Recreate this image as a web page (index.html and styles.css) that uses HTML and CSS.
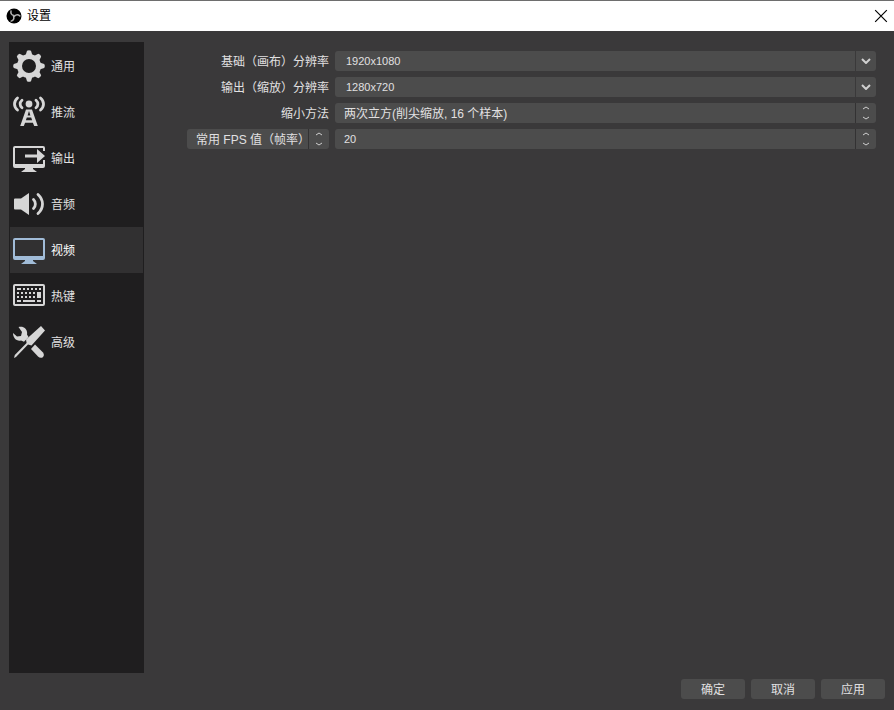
FILE: index.html
```html
<!DOCTYPE html>
<html lang="zh-CN">
<head>
  <meta charset="UTF-8" />
  <title>设置</title>
  <meta name="viewport" content="width=device-width, initial-scale=1.0" />
  <link rel="stylesheet" href="styles.css">
</head>
<body>

<header class="titlebar">
  <svg class="logo" viewBox="0 0 32 32" aria-hidden="true">
    <circle cx="16" cy="16" r="15" fill="#000"/>
    <g fill="none" stroke="#b4b4b4" stroke-width="3" stroke-linecap="round">
      <path d="M10 6c-1 5 1 8 6 9"/>
      <path d="M10 6c-1 5 1 8 6 9" transform="rotate(120 16 16)"/>
      <path d="M10 6c-1 5 1 8 6 9" transform="rotate(240 16 16)"/>
    </g>
  </svg>
  <h1>设置</h1>
  <button type="button" class="close" aria-label="关闭">
    <svg viewBox="0 0 12 12"><path d="M1 1l10 10M11 1L1 11"/></svg>
  </button>
</header>

<div class="content">
  <nav class="sidebar">
    <a href="#general">
      <svg viewBox="0 0 32 32">
        <circle class="ring" cx="16" cy="16" r="9.5"/>
        <path id="tooth" d="M12.500 5.500L14 .8q2-1.200 4 0l1.500 4.700z"/>
        <use href="#tooth" transform="rotate(45 16 16)"/>
        <use href="#tooth" transform="rotate(90 16 16)"/>
        <use href="#tooth" transform="rotate(135 16 16)"/>
        <use href="#tooth" transform="rotate(180 16 16)"/>
        <use href="#tooth" transform="rotate(225 16 16)"/>
        <use href="#tooth" transform="rotate(270 16 16)"/>
        <use href="#tooth" transform="rotate(315 16 16)"/>
      </svg>
      <span>通用</span>
    </a>
    <a href="#stream">
      <svg viewBox="0 0 32 32">
        <circle cx="16" cy="8" r="3.400"/>
        <path class="line" d="M4.500 2c-4 3.500-4 8.500 0 12M27.500 2c4 3.500 4 8.500 0 12M9 4.200c-2.500 2.300-2.500 5.300 0 7.600M23 4.200c2.500 2.300 2.500 5.300 0 7.600"/>
        <path fill-rule="evenodd" d="M13 13.500h6L24.800 30h-3.600l-1.300-3.200h-7.800L10.800 30H7.200zM16 15l-1.400 4.500h2.800zM13.800 21.500l-.9 2.800h6.200l-.9-2.800z"/>
      </svg>
      <span>推流</span>
    </a>
    <a href="#output">
      <svg viewBox="0 0 32 32">
        <path d="M2 4h28q2 0 2 2v3h-2V6H2v16h28v-4h2v6q0 2-2 2H20v1l4 3H8l4-3v-1H2q-2 0-2-2V6q0-2 2-2z"/>
        <path d="M12 12.500h12V7l8 7-8 7v-5.500H12z"/>
      </svg>
      <span>输出</span>
    </a>
    <a href="#audio">
      <svg viewBox="0 0 32 32">
        <path d="M2 10.500h6L16 5v22l-8-5.500H2q-1 0-1-1v-9q0-1 1-1z"/>
        <path class="line" d="M20.500 11.500c2.500 2.500 2.500 6.500 0 9M25 6.500c6 5.500 6 13.500 0 19"/>
      </svg>
      <span>音频</span>
    </a>
    <a href="#video" class="active" aria-current="page">
      <svg viewBox="0 0 32 32">
        <path fill-rule="evenodd" d="M2 4h28q2 0 2 2v18q0 2-2 2H20v1l4 3H8l4-3v-1H2q-2 0-2-2V6q0-2 2-2zm0 2v16h28V6z"/>
      </svg>
      <span>视频</span>
    </a>
    <a href="#hotkeys">
      <svg viewBox="0 0 32 32">
        <path fill-rule="evenodd" d="M2 4h28q2 0 2 2v18q0 2-2 2H2q-2 0-2-2V6q0-2 2-2zm0 2v18h28V6z"/>
        <path class="keys" d="M10 9h18M8 13h14M4 17h18"/>
        <path d="M4 8h4v2H4zM4 12h2v2H4zM24 12h4v6h-4zM4 20h4v2H4zM10 20h12v2H10zM24 20h4v2h-4z"/>
      </svg>
      <span>热键</span>
    </a>
    <a href="#advanced">
      <svg viewBox="0 0 32 32">
        <path d="M28 0l4 4.500L18.500 19.500 15 18.500 3 31l-2 1 .8-3L13.600 17l-.6-3.500z"/>
        <path d="M5.500 1c5-1.500 9.500 2 8.500 7.500l1.500 2.500-4.500 4.800-3-1.300C3.500 15.500 0 12 0 7l4 3.500 4-.5 1-4z"/>
        <path d="M22 18.500l8 8q2 3-.5 5-2.500 1-4.500-1l-7-7.500z"/>
      </svg>
      <span>高级</span>
    </a>
  </nav>

  <main class="panel">
    <form id="settings" class="form">
      <label for="baseRes">基础（画布）分辨率</label>
      <div class="combo">
        <input id="baseRes" type="text" value="1920x1080" />
        <button type="button" aria-label="选择基础分辨率"><svg viewBox="0 0 10 6"><path d="M1 1l4 4 4-4"/></svg></button>
      </div>

      <label for="outputRes">输出（缩放）分辨率</label>
      <div class="combo">
        <input id="outputRes" type="text" value="1280x720" />
        <button type="button" aria-label="选择输出分辨率"><svg viewBox="0 0 10 6"><path d="M1 1l4 4 4-4"/></svg></button>
      </div>

      <label for="downscale">缩小方法</label>
      <div class="select">
        <select id="downscale"><option>两次立方(削尖缩放, 16 个样本)</option></select>
        <svg viewBox="0 0 6 12"><path d="M0 2l3-2 3 2M0 10l3 2 3-2"/></svg>
      </div>

      <div class="select">
        <select id="fpsType" aria-label="FPS 类型"><option>常用 FPS 值（帧率）</option></select>
        <svg viewBox="0 0 6 12"><path d="M0 2l3-2 3 2M0 10l3 2 3-2"/></svg>
      </div>
      <div class="select">
        <select id="fps" class="number" aria-labelledby="fpsType"><option>20</option></select>
        <svg viewBox="0 0 6 12"><path d="M0 2l3-2 3 2M0 10l3 2 3-2"/></svg>
      </div>
    </form>
  </main>
</div>

<footer class="actions">
  <button type="submit" form="settings">确定</button>
  <button type="button">取消</button>
  <button type="button">应用</button>
</footer>

</body>
</html>
```
FILE: styles.css
```css
* { box-sizing: border-box; }
body {
  margin: 0;
  min-height: 100vh;
  display: flex;
  flex-direction: column;
  background: #3a393a;
  color: #e1e0e1;
  font-family: "Liberation Sans", "Noto Sans CJK SC", sans-serif;
  font-size: 12px;
  line-height: 20px;
}
button, input, select {
  font: inherit;
  color: inherit;
  margin: 0;
  padding: 0;
  border: none;
  border-radius: 0;
  background: #4c4c4c;
}

/* title bar */
.titlebar {
  display: flex;
  align-items: center;
  height: 31px;
  padding: 0 6px;
  border-top: 1px solid #6e6e6e;
  background: #fff;
  color: #000;
}
.titlebar h1 {
  flex: 1;
  margin: 0 0 0 5px;
  font-size: 12px;
  font-weight: normal;
}
.logo { width: 16px; height: 16px; }
.close {
  display: flex;
  background: none;
  cursor: pointer;
}
.close svg {
  width: 14px;
  height: 14px;
  fill: none;
  stroke: #000;
}

/* body */
.content {
  flex: 1;
  display: flex;
  padding: 11px 9px 0;
}
.sidebar {
  width: 135px;
  padding: 1px;
  background: #1f1e1f;
}
.sidebar a {
  display: flex;
  align-items: center;
  gap: 6px;
  height: 46px;
  padding-left: 3px;
  color: #e1e0e1;
  text-decoration: none;
}
.sidebar a.active { background: #313031; color: #fff; }
.sidebar span { padding-top: 2px; }
.sidebar svg {
  width: 32px;
  height: 32px;
  fill: #d6d6d6;
}
.sidebar .active svg { fill: #a1bcd8; }
.sidebar .line {
  fill: none;
  stroke: #d6d6d6;
  stroke-width: 2.8;
  stroke-linecap: round;
}
.sidebar .ring {
  fill: none;
  stroke: #d6d6d6;
  stroke-width: 5;
}
.sidebar .keys {
  fill: none;
  stroke: #d6d6d6;
  stroke-width: 2;
  stroke-dasharray: 2 2;
}

/* form */
.panel { flex: 1; padding: 9px 9px 0 43px; }
.form {
  display: grid;
  grid-template-columns: 142px 1fr;
  grid-auto-rows: 20px;
  gap: 6px;
}
.form label {
  line-height: 22px;
  text-align: right;
}
.combo, .select {
  position: relative;
  display: flex;
  border-radius: 3px;
  overflow: hidden;
}
.combo { gap: 1px; }
.combo input {
  flex: 1;
  min-width: 0;
  padding-left: 11px;
  font-size: 11px;
}
.combo button {
  display: flex;
  align-items: center;
  justify-content: center;
  width: 20px;
}
.combo svg {
  width: 10px;
  height: 6px;
  stroke-width: 2;
}
.select select {
  flex: 1;
  min-width: 0;
  padding-left: 9px;
  line-height: 22px;
  appearance: none;
}
.select select.number { font-size: 11px; line-height: 20px; }
.select::after {
  content: "";
  position: absolute;
  top: 0;
  right: 20px;
  width: 1px;
  height: 100%;
  background: #333233;
}
.select svg {
  position: absolute;
  top: 4px;
  right: 7px;
  width: 6px;
  height: 12px;
  overflow: visible;
  pointer-events: none;
}
.form svg { fill: none; stroke: #d0d0d0; }

/* buttons */
.actions {
  display: flex;
  justify-content: flex-end;
  gap: 6px;
  padding: 6px 9px 11px;
}
.actions button {
  width: 64px;
  height: 20px;
  padding-top: 1px;
  border-radius: 3px;
  cursor: pointer;
}
```
